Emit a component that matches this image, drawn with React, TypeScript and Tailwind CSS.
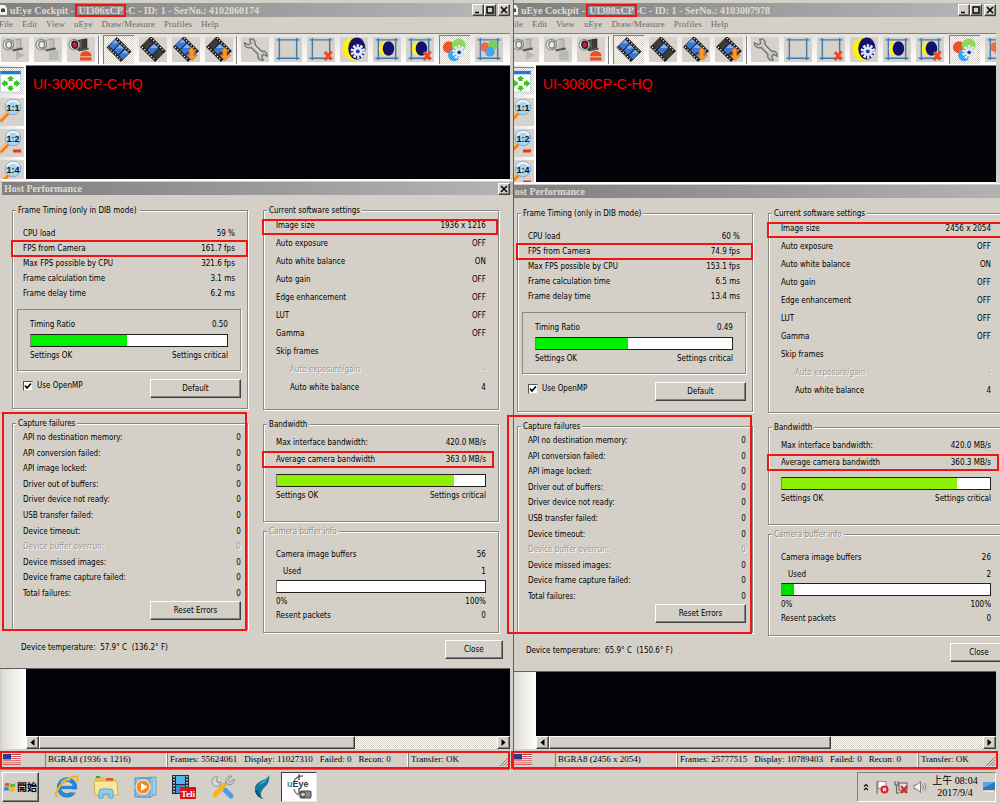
import React from 'react';
import clsx from 'clsx';

interface CameraStats {
  id: string;
  titleTag: string;
  serial: string;
  model: string;
  cpu: string;
  fps: string;
  maxFps: string;
  calcTime: string;
  delayTime: string;
  ratio: string;
  ratioPct: number;
  imageSize: string;
  bandwidth: string;
  bandwidthPct: number;
  buffers: string;
  used: string;
  usedPct: number;
  temperature: string;
  format: string;
  frames: string;
  display: string;
  scrollPct: number;
}

const cameras: CameraStats[] = [
  {
    id: 'cam1',
    titleTag: 'UI306xCP',
    serial: '4102860174',
    model: 'UI-3060CP-C-HQ',
    cpu: '59 %',
    fps: '161.7 fps',
    maxFps: '321.6 fps',
    calcTime: '3.1 ms',
    delayTime: '6.2 ms',
    ratio: '0.50',
    ratioPct: 49,
    imageSize: '1936 x 1216',
    bandwidth: '363.0 MB/s',
    bandwidthPct: 85,
    buffers: '56',
    used: '1',
    usedPct: 0,
    temperature: '57.9° C  (136.2° F)',
    format: 'BGRA8 (1936 x 1216)',
    frames: '55624061',
    display: '11027310',
    scrollPct: 69,
  },
  {
    id: 'cam2',
    titleTag: 'UI308xCP',
    serial: '4103007978',
    model: 'UI-3080CP-C-HQ',
    cpu: '60 %',
    fps: '74.9 fps',
    maxFps: '153.1 fps',
    calcTime: '6.5 ms',
    delayTime: '13.4 ms',
    ratio: '0.49',
    ratioPct: 47,
    imageSize: '2456 x 2054',
    bandwidth: '360.3 MB/s',
    bandwidthPct: 84,
    buffers: '26',
    used: '2',
    usedPct: 6,
    temperature: '65.9° C  (150.6° F)',
    format: 'BGRA8 (2456 x 2054)',
    frames: '25777515',
    display: '10789403',
    scrollPct: 65,
  },
];

const failures = [
  'API no destination memory:',
  'API conversion failed:',
  'API image locked:',
  'Driver out of buffers:',
  'Driver device not ready:',
  'USB transfer failed:',
  'Device timeout:',
  'Device buffer overrun:',
  'Device missed images:',
  'Device frame capture failed:',
  'Total failures:',
];

const raised =
  'border border-t-white border-l-white border-r-[#404040] border-b-[#404040] shadow-[inset_-1px_-1px_0_#808080]';
const checker = 'bg-[repeating-conic-gradient(#ffffff_0_25%,#d4d0c8_0_50%)] bg-[length:2px_2px]';

/* ---------- toolbar icons ---------- */

const CameraIcon = ({ mode }: { mode: 'play' | 'stop' | 'eject' }) => {
  const live = mode === 'eject';
  return (
    <svg viewBox="0 0 28 26" className="w-full h-full">
      <path d="M9 4l11-2v9l-9 3z" fill={live ? '#3a3a3a' : '#bdbdbd'} stroke={live ? '#222' : '#9a9a9a'} />
      <path d="M14 3v9" stroke={live ? '#777' : '#ddd'} />
      <ellipse cx="7" cy="8" rx="5.5" ry="5.5" fill="#e8e8e8" stroke="#8a8a8a" strokeWidth="1.2" />
      <ellipse cx="7.500" cy="8" rx="3" ry="3.600" fill={live ? '#d21f2c' : '#ececec'} stroke={live ? '#222' : '#808080'} strokeWidth="1.500" />
      <path d="M12 14l10-2" stroke="#555" strokeWidth="2" />
      {mode === 'play' && <path d="M15 14l9 5-9 5z" fill="#b5b5b5" />}
      {mode === 'stop' && <rect x="15" y="14" width="10" height="10" fill="#b9b9b9" />}
      {mode === 'eject' && (
        <g fill="#f24a1c">
          <path d="M13 20a6 5.500 0 0 1 12 0z" />
          <rect x="13" y="21.200" width="12" height="3.200" />
        </g>
      )}
    </svg>
  );
};

const FilmIcon = ({ frames, arrow }: { frames: 'all' | 'one'; arrow?: boolean }) => {
  const side = frames === 'all' ? '#3a78d8' : '#3c3c3c';
  return (
    <svg viewBox="0 0 28 26" className="w-full h-full">
      <g transform="rotate(45 14 12.500)">
        <rect x="3" y="4.500" width="22" height="16" fill="#1f1f1f" />
        <path d="M4.500 6h19M4.500 19h19" stroke="#f2f2f2" strokeWidth="1.300" strokeDasharray="1.300 2" />
        <rect x="3.500" y="7.800" width="6.200" height="9.400" fill={side} />
        <rect x="10.700" y="7.800" width="6.600" height="9.400" fill="#3a78d8" />
        <rect x="18.300" y="7.800" width="6.200" height="9.400" fill={side} />
        <path d="M11 8h6l-6 6z" fill="#7fb0f4" />
        {frames === 'all' && <path d="M4 8h5l-5 5zM19 8h5l-5 5z" fill="#7fb0f4" />}
      </g>
      {arrow && (
        <path d="M20 11l4 4h-2v4h4l-5.500 5.500L15 19h3v-4h-2z" fill="#fb9a1c" stroke="#ee6a1c" strokeWidth=".8" />
      )}
    </svg>
  );
};

const WrenchIcon = () => (
  <svg viewBox="0 0 28 26" className="w-full h-full">
    <path
      d="M3 6l4 2 2.500-1.500L8.500 2.500C12 1 15 4 14 8l7 7c3-1 6 1 5.500 5l-3.500-2-2 2 1.500 4c-4 .5-6.500-2-5.500-6l-7-7C6.500 12 2.500 10 3 6z"
      fill="#c8c8c8"
      stroke="#6e6e6e"
      strokeWidth="1.300"
    />
    <path d="M12 8.500l8 8" stroke="#f2f2f2" />
  </svg>
);

const Gear = ({ cx, cy }: { cx: number; cy: number }) => (
  <g>
    <circle cx={cx} cy={cy} r="5.500" fill="none" stroke="#eef1fb" strokeWidth="4" strokeDasharray="2.200 1.250" />
    <circle cx={cx} cy={cy} r="4.800" fill="#e6ebfa" stroke="#a4aed8" strokeWidth=".5" />
    <circle cx={cx} cy={cy} r="2" fill="#25389c" />
  </g>
);

const AoiFrame = () => (
  <path d="M5 1v23M23 1v23M2 3h24M2 22h24" stroke="#3f7bb0" strokeWidth="1.500" fill="none" />
);

const RedCross = () => <path d="M18 15.500l7 8M25 15L18 24" stroke="#ee4a22" strokeWidth="3.200" />;

const AoiIcon = ({ moon, cross, rgb }: { moon?: boolean; cross?: boolean; rgb?: boolean }) => (
  <svg viewBox="0 0 28 26" className="w-full h-full">
    <AoiFrame />
    {moon && (
      <g>
        <circle cx="13" cy="12" r="7.500" fill="#fff01e" />
        <ellipse cx="15.500" cy="12" rx="6" ry="7.500" fill="#10126e" />
      </g>
    )}
    {rgb && (
      <g>
        <circle cx="10" cy="10.500" r="5" fill="#ef6a45" />
        <circle cx="18" cy="8.500" r="5" fill="#76cf5b" />
        <circle cx="15" cy="15.500" r="5" fill="#4aa5ec" />
      </g>
    )}
    {cross && <RedCross />}
  </svg>
);

const MoonGearIcon = () => (
  <svg viewBox="0 0 28 26" className="w-full h-full">
    <circle cx="14" cy="12.500" r="12" fill="#ffef12" />
    <ellipse cx="17" cy="12" rx="9" ry="11.500" fill="#15146c" />
    <Gear cx={18} cy={15} />
  </svg>
);

const ColorGearIcon = () => (
  <svg viewBox="0 0 28 26" className="w-full h-full">
    <circle cx="7.500" cy="10" r="6.500" fill="#f0532a" />
    <circle cx="18" cy="8" r="7.500" fill="#86dc5a" />
    <circle cx="13" cy="18.500" r="6.500" fill="#37a7f4" />
    <Gear cx={18.5} cy={15.5} />
  </svg>
);

const FitIcon = () => (
  <svg viewBox="0 0 24 28" className="w-full h-full">
    <rect x="0" y="4" width="21" height="21" fill="#fff" stroke="#b9cbe0" />
    <rect x="0" y="3" width="21" height="3.500" fill="#1d78d8" />
    <g fill="#3cc21f">
      <path d="M10.500 8l4 3.500h-2v2h-4v-2h-2zM10.500 24l4-3.500h-2v-2h-4v2h-2zM1 16l4-4v2h2.500v4H5v2zM20.500 16l-4-4v2H14v4h2.500v2z" />
    </g>
  </svg>
);

const ZoomIcon = ({ label, minus }: { label: string; minus?: boolean }) => (
  <svg viewBox="0 0 24 28" className="w-full h-full">
    <path d="M8 14.500L0 23" stroke="#ef7f1a" strokeWidth="4.500" />
    <path d="M7.500 13.500L0 21" stroke="#ffd08a" strokeWidth="1.500" />
    <circle cx="13" cy="9" r="7.800" fill="#a9d6f4" stroke="#86aecb" />
    <path d="M7 6.500a6.800 6.800 0 0 1 12-.5" fill="none" stroke="#e9f6ff" strokeWidth="2" />
    <text x="13" y="12.500" textAnchor="middle" fontSize="9" fontWeight="700" fontFamily="Liberation Sans, sans-serif" fill="#111">
      {label}
    </text>
    {minus && <rect x="13" y="20.500" width="8" height="3" fill="#ee3524" />}
  </svg>
);

/* ---------- small parts ---------- */

// red marker drawn round a value
const Mark = ({ className }: { className: string }) => (
  <span className={clsx('absolute z-10 border-2 border-[#f01414] pointer-events-none', className)} />
);

const ToolButton = ({ label, pressed, children }: { label: string; pressed?: boolean; children: React.ReactNode }) => (
  <button
    aria-label={label}
    className={clsx(
      'shrink-0 flex items-center justify-center',
      pressed ? `w-[31px] h-[29px] px-[2px] py-px border-l border-t border-[#808080] ${checker}` : 'w-7 h-[25px] bg-[#d6d2cb]'
    )}
  >
    {children}
  </button>
);

const Separator = ({ className }: { className?: string }) => (
  <span className={clsx('shrink-0 w-[2px] h-7 bg-[#808080] border-r border-white', className)} />
);

const Toolbar = () => (
  <div
    role="toolbar"
    className="h-[32px] pl-px flex items-center gap-[5px] overflow-hidden border-t border-[#808080] bg-linear-to-b from-[#e6e4e0] to-white"
  >
    <ToolButton label="Start live"><CameraIcon mode="play" /></ToolButton>
    <ToolButton label="Stop live"><CameraIcon mode="stop" /></ToolButton>
    <ToolButton label="Close camera"><CameraIcon mode="eject" /></ToolButton>
    <Separator className="-mx-[2px]" />
    <ToolButton label="Display all frames" pressed><FilmIcon frames="all" /></ToolButton>
    <ToolButton label="Display single frame"><FilmIcon frames="one" /></ToolButton>
    <ToolButton label="Load frames"><FilmIcon frames="all" arrow /></ToolButton>
    <ToolButton label="Load frame"><FilmIcon frames="one" arrow /></ToolButton>
    <Separator className="-mx-[2px]" />
    <ToolButton label="Properties"><WrenchIcon /></ToolButton>
    <ToolButton label="Area of interest"><AoiIcon /></ToolButton>
    <ToolButton label="Reset area of interest"><AoiIcon cross /></ToolButton>
    <ToolButton label="Auto exposure"><MoonGearIcon /></ToolButton>
    <ToolButton label="Exposure area"><AoiIcon moon /></ToolButton>
    <ToolButton label="Reset exposure area"><AoiIcon moon cross /></ToolButton>
    <ToolButton label="Auto white balance" pressed><ColorGearIcon /></ToolButton>
    <ToolButton label="White balance area"><AoiIcon rgb /></ToolButton>
  </div>
);

const CaptionButton = ({ label, children }: { label: string; children: React.ReactNode }) => (
  <button aria-label={label} className={clsx('w-3 h-3 bg-[#d4d0c8] flex items-center justify-center', raised)}>
    <svg viewBox="0 0 8 8" className="w-2 h-2" fill="none" stroke="#000" strokeWidth="1.500">
      {children}
    </svg>
  </button>
);

const PushButton = ({ children, className }: { children: React.ReactNode; className: string }) => (
  <button className={clsx('h-[19px] bg-[#d4d0c8] text-center', raised, className)}>{children}</button>
);

const Group = ({ title, disabled, className, bodyClassName, children }: {
  title: string;
  disabled?: boolean;
  className?: string;
  bodyClassName: string;
  children: React.ReactNode;
}) => (
  <fieldset className={clsx('relative min-w-0 border border-[#8a8883] shadow-[1px_1px_0_#fff,inset_1px_1px_0_#fff]', className)}>
    <legend className={clsx('ml-[3px] px-[2px] leading-[13px] bg-[#d4d0c8]', disabled && 'text-[#8f8d88] [text-shadow:1px_1px_0_#fff]')}>
      {title}
    </legend>
    <div className={bodyClassName}>{children}</div>
  </fieldset>
);

const Row = ({ label, value, className, mark, disabled }: {
  label: string;
  value?: string;
  className?: string;
  mark?: string;
  disabled?: boolean;
}) => (
  <div className={clsx('relative flex justify-between', className, disabled && 'text-[#9a9893] [text-shadow:1px_1px_0_#fff]')}>
    <span>{label}</span>
    <span>{value}</span>
    {mark && <Mark className={mark} />}
  </div>
);

const Bar = ({ label, pct, color, className }: { label: string; pct: number; color: string; className?: string }) => (
  <div
    role="progressbar"
    aria-label={label}
    aria-valuenow={pct}
    className={clsx('h-[13px] bg-white border border-[#222] border-l-[#808080]', className)}
  >
    <div className={clsx('h-full', color)} style={{ width: `${pct}%` }} />
  </div>
);

/* ---------- host performance dialog ---------- */

const HostPerformance = ({ cam, second }: { cam: CameraStats; second: boolean }) => (
  <section
    className={clsx(
      'relative bg-[#d4d0c8] border-t border-white pt-px text-[8px] text-black',
      second ? '-mr-[22px]' : 'ml-[2px]'
    )}
  >
    <header className="h-[13px] flex items-center justify-between overflow-hidden bg-linear-to-r from-[#808080] to-[#b4b4b4]">
      <h2 className={clsx("font-['Liberation_Serif',serif] font-bold text-[10px] text-[#dedbd5]", second ? '-ml-[7px]' : 'ml-[2px]')}>
        Host Performance
      </h2>
      {!second && (
        <span className="mr-[3px] flex">
          <CaptionButton label="Close dialog"><path d="M1 1l6 6M7 1L1 7" /></CaptionButton>
        </span>
      )}
    </header>

    <div className={clsx('pt-[9px] pr-[14px] grid grid-cols-2 gap-x-[15px]', second ? 'pl-[3px]' : 'pl-[10px]')}>
      <div>
        <Group title="Frame Timing (only in DIB mode)" bodyClassName="px-1 pt-[9px] pb-[10px]">
          <div className="pl-[6px] pr-2 leading-[15px]">
            <Row label="CPU load" value={cam.cpu} />
            <Row label="FPS from Camera" value={cam.fps} mark="-left-[12px] -right-[13px] -top-px -bottom-px" />
            <Row label="Max FPS possible by CPU" value={cam.maxFps} />
            <Row label="Frame calculation time" value={cam.calcTime} />
            <Row label="Frame delay time" value={cam.delayTime} />
          </div>
          <div className="mt-2 mr-[2px] px-3 pt-2 pb-[7px] leading-[14px] border border-[#8a8883] shadow-[1px_1px_0_#fff]">
            <Row label="Timing Ratio" value={cam.ratio} />
            <Bar label="Timing Ratio" pct={cam.ratioPct} color="bg-[#00f000]" className="my-[2px]" />
            <Row label="Settings OK" value="Settings critical" />
          </div>
          <div className="mt-2 pl-[6px] pr-[2px] flex items-start justify-between">
            <label className="flex items-center gap-1 leading-[13px]">
              <span className="relative flex">
                <input
                  type="checkbox"
                  defaultChecked
                  className="peer appearance-none w-[10px] h-[10px] bg-white border border-t-[#555] border-l-[#555] border-[#d4d0c8]"
                />
                <svg viewBox="0 0 10 10" className="absolute inset-0 hidden peer-checked:block pointer-events-none">
                  <path d="M2 4.500l2 2.500 4-4.500" fill="none" stroke="#000" strokeWidth="1.600" />
                </svg>
              </span>
              Use OpenMP
            </label>
            <PushButton className="w-[91px]">Default</PushButton>
          </div>
        </Group>

        <Group title="Capture failures" className="mt-2" bodyClassName="px-1 pb-[9px]">
          <Mark className="-left-[11px] right-0 -top-[18px] -bottom-[2px]" />
          <div className="h-[171px] pl-[6px] pr-[2px] flex flex-col justify-between leading-[15px]">
            {failures.map((name) => (
              <Row key={name} label={name} value="0" disabled={name === 'Device buffer overrun:'} />
            ))}
          </div>
          <div className="pr-[2px] flex justify-end">
            <PushButton className="w-[91px]">Reset Errors</PushButton>
          </div>
        </Group>
      </div>

      <div>
        <Group title="Current software settings" bodyClassName="px-3 pb-[12px]">
          <div className="leading-[18px]">
            <Row label="Image size" value={cam.imageSize} mark="-left-[14px] -right-[12px] top-[2px] bottom-0" />
            <Row label="Auto exposure" value="OFF" />
            <Row label="Auto white balance" value="ON" />
            <Row label="Auto gain" value="OFF" />
            <Row label="Edge enhancement" value="OFF" />
            <Row label="LUT" value="OFF" />
            <Row label="Gamma" value="OFF" />
            <Row label="Skip frames" />
            <Row label="Auto exposure/gain" value="-" className="pl-[14px]" disabled />
            <Row label="Auto white balance" value="4" className="pl-[14px]" />
          </div>
        </Group>

        <Group title="Bandwidth" className="mt-2" bodyClassName="px-3 pt-[3px] pb-[18px]">
          <div className="leading-[17px]">
            <Row label="Max interface bandwidth:" value="420.0 MB/s" />
            <Row label="Average camera bandwidth" value={cam.bandwidth} mark="-left-[14px] -right-[8px] top-0 bottom-0" />
          </div>
          <Bar label="Average camera bandwidth" pct={cam.bandwidthPct} color="bg-[#8cf000]" className="mt-[6px] mb-[2px]" />
          <Row label="Settings OK" value="Settings critical" className="leading-[14px]" />
        </Group>

        <Group title="Camera buffer info" disabled className="mt-[3px]" bodyClassName="px-3 pt-[8px] pb-[9px]">
          <div className="leading-[17px]">
            <Row label="Camera image buffers" value={cam.buffers} />
            <Row label="Used" value={cam.used} className="pl-[7px]" />
          </div>
          <Bar label="Used buffers" pct={cam.usedPct} color="bg-[#00e000]" className="mb-[2px]" />
          <div className="leading-[14px]">
            <Row label="0%" value="100%" />
            <Row label="Resent packets" value="0" />
          </div>
        </Group>
      </div>
    </div>

    <footer className={clsx('pt-[7px] pb-[9px] pr-[10px] flex items-start justify-between', second ? 'pl-[12px]' : 'pl-[19px]')}>
      <p className="leading-[15px] whitespace-pre">Device temperature:  {cam.temperature}</p>
      <PushButton className="w-[58px]">Close</PushButton>
    </footer>
  </section>
);

/* ---------- camera window ---------- */

const UsFlag = () => (
  <svg viewBox="0 0 18 11" className="w-[18px] h-[11px]">
    <rect width="18" height="11" fill="#fff" />
    <path d="M0 .5h18M0 2.600h18M0 4.700h18M0 6.800h18M0 8.900h18M0 10.700h18" stroke="#c8404a" strokeWidth="1" />
    <rect width="8" height="5.500" fill="#2d3a8c" />
  </svg>
);

const CameraWindow = ({ cam, second }: { cam: CameraStats; second: boolean }) => (
  <section
    className={clsx(
      "relative min-w-0 flex flex-col bg-[#d4d0c8] font-['Liberation_Serif',serif]",
      second ? 'flex-[486] pr-1' : 'flex-[514] pr-[3px] border-r border-[#606060]'
    )}
  >
    <header className="mt-[3px] h-[14px] flex items-center justify-between overflow-hidden bg-linear-to-r from-[#808080] to-[#b8b8b8]">
      <div className="flex items-center gap-[2px]">
        <svg viewBox="0 0 8 12" className={clsx('w-2 h-3', second && '-ml-[3px]')}>
          <path d="M0 1h5l2 3v7H0z" fill="#f4f4f4" />
          <path d="M1 5a3 2.500 0 0 1 4 0v3H1z" fill="#444" />
        </svg>
        <h1 className="font-bold text-[10px] leading-[13px] text-[#dedbd5] whitespace-nowrap">
          uEye Cockpit -{' '}
          <span className="relative mx-[2px]">
            {cam.titleTag}
            <Mark className="-inset-x-[3px] -inset-y-px" />
          </span>
          -C - ID: 1 - SerNo.: {cam.serial}
        </h1>
      </div>
      <div className="flex">
        <CaptionButton label="Minimize"><path d="M1 6.500h4" /></CaptionButton>
        <CaptionButton label="Maximize"><path d="M1 1h6v6H1z" /></CaptionButton>
        <span className="w-[2px]" />
        <CaptionButton label="Close"><path d="M1 1l6 6M7 1L1 7" /></CaptionButton>
      </div>
    </header>

    <nav className="h-4 overflow-hidden">
      <ul className={clsx('flex gap-[9px] text-[9px] leading-[15px] text-[#6c6a66]', second ? '-ml-[5px]' : '-ml-px')}>
        {['File', 'Edit', 'View', 'uEye', 'Draw/Measure', 'Profiles', 'Help'].map((item) => (
          <li key={item}><button>{item}</button></li>
        ))}
      </ul>
    </nav>

    <div className="overflow-hidden">
      <div className={clsx(second && '-ml-1')}>
        <Toolbar />
      </div>
    </div>

    <div className={clsx('flex overflow-hidden border-b border-[#f4f4f4]', second ? 'h-[118px]' : 'h-[115px]')}>
      <div className={clsx('shrink-0 w-[26px] pt-[2px] flex flex-col gap-[3px] bg-linear-to-r from-[#e4e2de] to-white', second && '-ml-1')}>
        <button aria-label="Fit to window" className={clsx('w-6 h-7 shrink-0 border-t border-[#808080]', checker)}><FitIcon /></button>
        <button aria-label="Zoom 1:1" className="w-6 h-7 shrink-0 bg-[#d6d2cb]"><ZoomIcon label="1:1" /></button>
        <button aria-label="Zoom 1:2" className="w-6 h-7 shrink-0 bg-[#d6d2cb]"><ZoomIcon label="1:2" minus /></button>
        <button aria-label="Zoom 1:4" className="w-6 h-7 shrink-0 bg-[#d6d2cb]"><ZoomIcon label="1:4" minus /></button>
      </div>
      <div className="flex-1 pl-[7px] pt-[9px] bg-[#040108] border-t border-[#808080]">
        <p className="font-['Liberation_Sans',sans-serif] text-[14px] leading-[18px] text-[#ff0000]">{cam.model}</p>
      </div>
    </div>

    <div className={clsx("font-['DejaVu_Sans_Condensed','DejaVu_Sans',sans-serif]", !second && '-mr-[3px]')}>
      <HostPerformance cam={cam} second={second} />
    </div>

    <div className={clsx('flex-1 min-h-[60px] flex border-t border-[#606060]', second ? 'pl-0' : 'pl-[2px]')}>
      <div className={clsx('shrink-0 bg-linear-to-r from-[#dedcd8] to-white', second ? 'w-[22px]' : 'w-6')} />
      <div className="flex-1 flex flex-col">
        <div className="flex-1 bg-[#040108]" />
        <div className={clsx('h-[13px] flex', checker)}>
          <button aria-label="Scroll left" className={clsx('w-[13px] flex items-center justify-center bg-[#d4d0c8]', raised)}>
            <svg viewBox="0 0 5 7" className="w-[5px] h-[7px]"><path d="M4.500 0v7L.5 3.500z" /></svg>
          </button>
          <div className="flex-1">
            <div className={clsx('h-full bg-[#d4d0c8]', raised)} style={{ width: `${cam.scrollPct}%` }} />
          </div>
          <button aria-label="Scroll right" className={clsx('w-[13px] flex items-center justify-center bg-[#d4d0c8]', raised)}>
            <svg viewBox="0 0 5 7" className="w-[5px] h-[7px]"><path d="M.5 0v7l4-3.500z" /></svg>
          </button>
        </div>
      </div>
    </div>

    <footer className="relative mt-[2px] h-[19px] pt-px flex text-[9px] leading-[14px] whitespace-pre text-black border-b border-[#808080]">
      <Mark className={second ? '-left-[3px] -right-[2px] inset-y-0' : 'inset-0'} />
      <span className={clsx('shrink-0 pt-[2px]', second ? 'w-[41px]' : 'w-[45px] pl-[3px]')}><UsFlag /></span>
      <span className="shrink-0 w-[122px] h-[15px] pl-[2px] border-l border-[#808080] border-r border-r-white">{cam.format}</span>
      <span className="shrink-0 w-[241px] h-[15px] pl-[2px] flex gap-[7px] border-l border-[#808080] border-r border-r-white">
        <span>Frames: {cam.frames}</span>
        <span>Display: {cam.display}</span>
        <span>Failed: 0</span>
        <span>Recon: 0</span>
      </span>
      <span className="flex-1 min-w-0 h-[15px] pl-[2px] flex justify-between border-l border-[#808080]">
        Transfer: OK
        <svg viewBox="0 0 10 10" className="mt-1 mr-px w-[10px] h-[10px]">
          <path d="M1 10l9-9M4 10l6-6M7 10l3-3" stroke="#808080" />
        </svg>
      </span>
    </footer>
  </section>
);

/* ---------- taskbar ---------- */

const WindowsLogo = () => (
  <svg viewBox="0 0 12 12" className="w-3 h-3">
    <path d="M1 2.500Q3 1 5.500 2.200L5 5.500Q3 4.500.5 5.800z" fill="#e8542a" />
    <path d="M6.300 2.600Q9 3.700 11.500 2.200L11 5.700Q8.500 7 5.800 5.900z" fill="#6fb52c" />
    <path d="M.4 6.600Q2.800 5.300 4.900 6.400L4.400 9.800Q2.300 8.600 0 10z" fill="#2f86d8" />
    <path d="M5.700 6.800Q8.300 7.900 10.900 6.600L10.400 10Q7.700 11.300 5.200 10.200z" fill="#f6b61c" />
  </svg>
);

const IeIcon = () => (
  <svg viewBox="0 0 26 26" className="w-[26px] h-[26px]">
    <circle cx="13" cy="13.500" r="8" fill="none" stroke="#2a86d1" strokeWidth="4.500" />
    <path d="M7 13.500h13" stroke="#2a86d1" strokeWidth="3.200" />
    <path d="M17 15.500h7v3h-7z" fill="#d4d0c8" />
    <path d="M7 9a8 8 0 0 1 9-3" fill="none" stroke="#8fd0f8" strokeWidth="1.500" />
    <path d="M3 23C-1 19 8 7 17 3.500c6-2.500 8-1 6 4" fill="none" stroke="#f0b41e" strokeWidth="2.200" />
  </svg>
);

const FolderIcon = () => (
  <svg viewBox="0 0 26 26" className="w-[26px] h-[26px]">
    <path d="M2 3h9l2 2h9v17H2z" fill="#e9c25b" />
    <path d="M3 2h4v2H3z" fill="#3aa146" />
    <path d="M13 4h7v3h-7z" fill="#d9583a" />
    <path d="M1 7h23l1 14H2z" fill="#f9e69c" stroke="#d6ae4e" />
    <path d="M6 24v-6q0-3 3-3h8q3 0 3 3v6h-4v-4h-6v4z" fill="#8fcdec" stroke="#5aa3cc" />
  </svg>
);

const MediaIcon = () => (
  <svg viewBox="0 0 26 26" className="w-[26px] h-[26px]">
    <path d="M10 4l14-1v18l-14 1z" fill="#a9cfe8" stroke="#6d9fc4" />
    <path d="M6 4l14 0v19H6z" fill="#bfdcf0" stroke="#6d9fc4" />
    <rect x="3" y="4" width="15" height="19" fill="#8dbde0" stroke="#5b8fb8" />
    <circle cx="11" cy="13" r="7" fill="#f28a1c" stroke="#fff" />
    <path d="M9 9l6.500 4L9 17z" fill="#fff" />
  </svg>
);

const TeliIcon = () => (
  <svg viewBox="0 0 26 26" className="w-[26px] h-[26px]">
    <rect x="1" y="1" width="17" height="19" fill="#1f2c38" />
    <path d="M3 2v17M16 2v17" stroke="#e8eef4" strokeWidth="1.500" strokeDasharray="1.500 1.500" />
    <rect x="5" y="2" width="9" height="8" fill="#52b4ee" />
    <rect x="5" y="11" width="9" height="8" fill="#2f8fd4" />
    <rect x="9" y="13" width="16" height="12" fill="#d8141c" />
    <text x="17" y="22.500" textAnchor="middle" fontSize="9" fontWeight="700" fontFamily="Liberation Serif, serif" fill="#fff">Teli</text>
  </svg>
);

const ToolsIcon = () => (
  <svg viewBox="0 0 26 26" className="w-[26px] h-[26px]">
    <path d="M3 4l5 5 11 11" stroke="#aab2b9" strokeWidth="2.500" />
    <path d="M2 7c0-3 3-5 6-4L6 6l2 3 3-1c0 3-3 5-6 4s-3-3-3-5z" fill="#d5dade" stroke="#7e868d" strokeWidth=".8" />
    <path d="M15 16l6 6" stroke="#4a9fe2" strokeWidth="5" strokeLinecap="round" />
    <path d="M14 11l4-4" stroke="#8b9299" strokeWidth="3" />
    <path d="M5 21l9-10" stroke="#f5b820" strokeWidth="5" strokeLinecap="round" />
    <path d="M22 2l-4 4 2 2 4-3c1 4-3 7-7 5-3-3 0-9 5-8z" fill="#c3cad0" stroke="#7e868d" strokeWidth=".8" />
  </svg>
);

const BirdIcon = () => (
  <svg viewBox="0 0 26 26" className="w-[26px] h-[26px]">
    <path d="M20 1C19 6 8 6 6 13c-1 5 2 9 7 12-2-5-1-8 2-11 4-4 6-7 5-13z" fill="#157a9c" />
    <path d="M20 1c-1 5-8 6-10 10 3-1 8-3 10-10z" fill="#49b4d0" />
    <path d="M6 17c1 4 4 7 9 8-4-2-6-5-6-9z" fill="#0e4f75" />
  </svg>
);

const UEyeIcon = () => (
  <svg viewBox="0 0 28 28" className="w-7 h-7">
    <path d="M18 3a10 10 0 0 0-9 5M9 16a8 8 0 0 0 5 6" fill="none" stroke="#6c6c6c" strokeWidth="1.300" />
    <path d="M14 1v6M14 15v6" stroke="#444" strokeWidth="1.200" />
    <text x="2" y="14" fontSize="9" fontWeight="700" fontFamily="Liberation Sans, sans-serif" fill="#333">
      <tspan fill="#1e8fa0">u</tspan>Eye
    </text>
    <rect x="15" y="18" width="11" height="7" rx="1" fill="#8a8a8a" stroke="#444" />
    <circle cx="18" cy="21.500" r="2.500" fill="#ccc" stroke="#333" />
  </svg>
);

const launchers = [
  { name: 'Internet Explorer', Icon: IeIcon },
  { name: 'Explorer', Icon: FolderIcon },
  { name: 'Media Player', Icon: MediaIcon },
  { name: 'Teli viewer', Icon: TeliIcon },
  { name: 'Tools', Icon: ToolsIcon },
  { name: 'Viewer', Icon: BirdIcon },
];

const Taskbar = () => (
  <footer className="h-[34px] px-[2px] flex items-center bg-[#d4d0c8] font-['Liberation_Serif','Noto_Sans_CJK_TC',serif]">
    <button className={clsx('w-[37px] h-[30px] flex items-center justify-center gap-px text-[10px] font-bold text-black whitespace-nowrap', raised)}>
      <WindowsLogo />
      開始
    </button>
    <div className="ml-2 flex items-center">
      {launchers.map(({ name, Icon }) => (
        <button key={name} aria-label={name} className="w-[39px] h-[30px] flex items-center justify-center">
          <Icon />
        </button>
      ))}
      <button
        aria-label="uEye Cockpit"
        className="w-9 h-[30px] flex items-center justify-center bg-white border border-t-[#404040] border-l-[#404040] border-r-[#e8e6e2] border-b-[#e8e6e2]"
      >
        <UEyeIcon />
      </button>
    </div>

    <div className="ml-auto mr-[2px] w-[139px] h-[30px] pl-[5px] flex items-center border border-t-[#808080] border-l-[#808080] border-r-white border-b-white">
      <button aria-label="Show hidden icons" className="w-[6px]">
        <svg viewBox="0 0 6 8" className="w-[6px] h-2" fill="none" stroke="#111" strokeWidth="1.200">
          <path d="M1 3.500l2-2 2 2M1 7l2-2 2 2" />
        </svg>
      </button>
      <svg viewBox="0 0 14 14" className="ml-[6px] w-[14px] h-[14px]">
        <path d="M2 1v13" stroke="#777" strokeWidth="1.300" />
        <path d="M3 1.500c3-1 4 1 8 0v7c-4 1-5-1-8 0z" fill="#fff" stroke="#888" />
        <circle cx="9.500" cy="9.500" r="4" fill="#d9252b" />
        <path d="M8 8l3 3M11 8l-3 3" stroke="#fff" strokeWidth="1.200" />
      </svg>
      <svg viewBox="0 0 14 14" className="ml-[5px] w-[14px] h-[14px]">
        <path d="M1 1v4h3V1M2.500 5v8h3" fill="none" stroke="#666" strokeWidth="1.200" />
        <rect x="5" y="3" width="8" height="7" fill="#e6e6e6" stroke="#555" />
        <path d="M6 12h6" stroke="#555" />
        <path d="M7 6l6 7M13 6l-6 7" stroke="#d9252b" strokeWidth="2" />
      </svg>
      <svg viewBox="0 0 14 14" className="ml-[5px] w-[14px] h-[14px]">
        <path d="M1 5h2.500l4-3.500v11L3.500 9H1z" fill="#f4f4f4" stroke="#777" />
        <path d="M9.500 4.500q2 2.500 0 5M11.500 3q3 4 0 8" fill="none" stroke="#888" />
      </svg>
      <time className="flex-1 text-center text-[10px] leading-[12px] text-black whitespace-nowrap">
        上午 08:04
        <br />
        2017/9/4
      </time>
      <svg viewBox="0 0 12 10" className="w-3 h-[10px]">
        <rect width="12" height="8" fill="#2c78c8" />
        <path d="M0 0h12L0 6z" fill="#5ea5e4" />
        <path d="M2 9.500h9" stroke="#eee" />
      </svg>
    </div>
  </footer>
);

export default function App() {
  return (
    <main className="min-h-screen flex flex-col overflow-hidden bg-[#d4d0c8]">
      <div className="flex-1 flex">
        {cameras.map((cam, index) => (
          <CameraWindow key={cam.id} cam={cam} second={index === 1} />
        ))}
      </div>
      <Taskbar />
    </main>
  );
}
